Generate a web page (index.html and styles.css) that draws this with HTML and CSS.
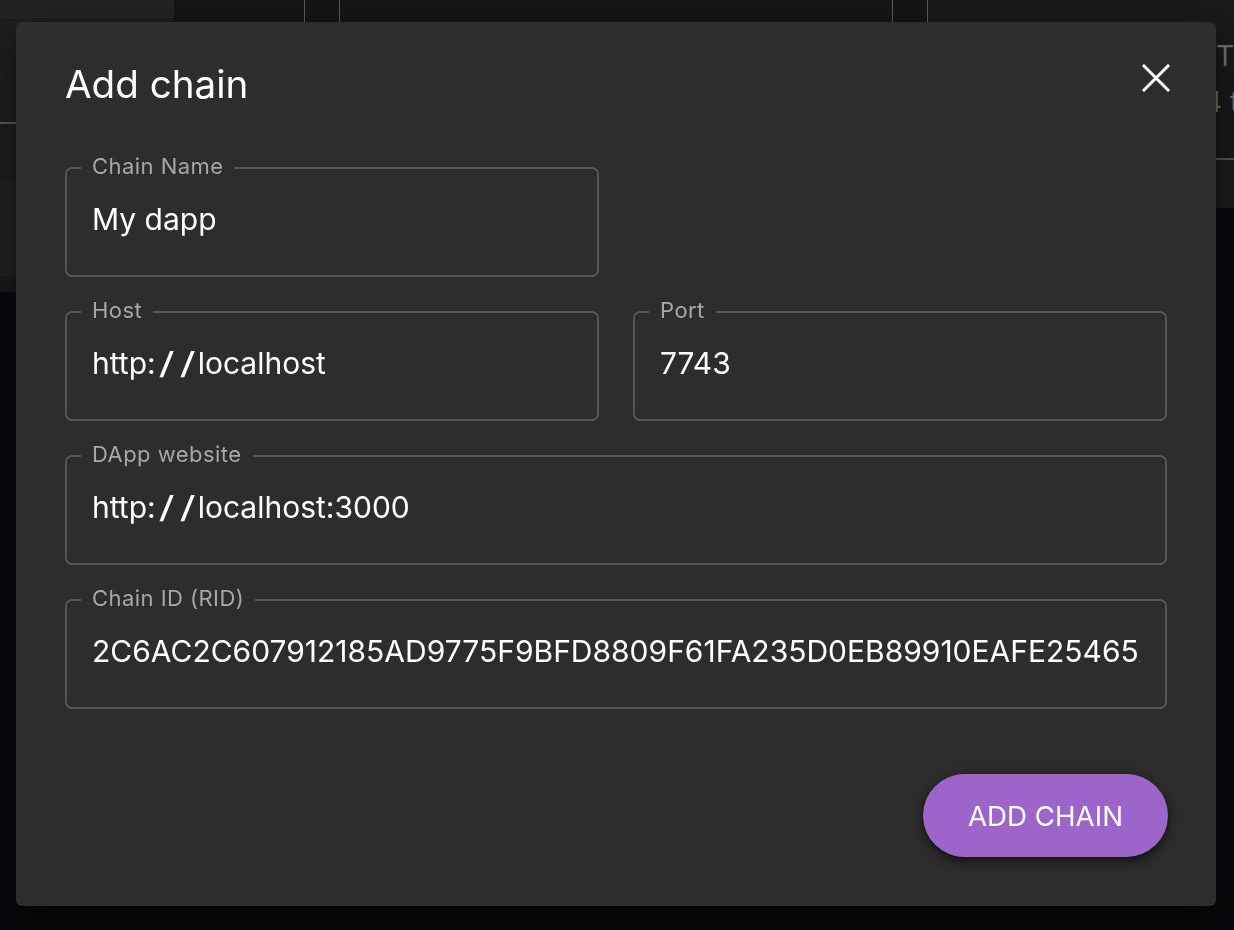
FILE: index.html
```html
<!DOCTYPE html>
<html lang="en">
<head>
<meta charset="utf-8">
<title>Add chain</title>
<link rel="stylesheet" href="styles.css">
</head>
<body>
<div class="app">
  <aside class="sidebar">
    <div class="sb-top"></div>
    <div class="sb-nav"></div>
    <div class="sb-nav2"></div>
    <div class="sb-block"></div>
    <div class="sb-end"></div>
  </aside>
  <main class="main">
    <header class="cards">
      <div class="card c1"></div>
      <div class="card c2"></div>
      <div class="card c3">
        <div class="c3-body">
          <div class="c3-title">T</div>
          <div class="c3-sub">4 t</div>
        </div>
        <div class="c3-foot"></div>
      </div>
    </header>
  </main>
</div>

<div class="modal" role="dialog" aria-labelledby="dlg-title">
  <div class="modal-head">
    <h2 id="dlg-title" class="modal-title">Add chain</h2>
    <button class="close" type="button" aria-label="Close">
      <svg width="28" height="28" viewBox="0 0 28 28" aria-hidden="true">
        <path d="M2 2 L26 26 M26 2 L2 26" stroke="#ffffff" stroke-width="3" stroke-linecap="square" fill="none"/>
      </svg>
    </button>
  </div>
  <form class="form">
    <div class="field">
      <span class="label" id="l-name">Chain Name</span>
      <div class="input" role="textbox" aria-labelledby="l-name" contenteditable="true" spellcheck="false">My dapp</div>
    </div>
    <div class="spacer"></div>
    <div class="field">
      <span class="label" id="l-host">Host</span>
      <div class="input" role="textbox" aria-labelledby="l-host" contenteditable="true" spellcheck="false">http:<span class="sl">/</span><span class="sl">/</span>localhost</div>
    </div>
    <div class="field">
      <span class="label" id="l-port">Port</span>
      <div class="input" role="textbox" aria-labelledby="l-port" contenteditable="true" spellcheck="false">7743</div>
    </div>
    <div class="field wide">
      <span class="label" id="l-web">DApp website</span>
      <div class="input" role="textbox" aria-labelledby="l-web" contenteditable="true" spellcheck="false">http:<span class="sl">/</span><span class="sl">/</span>localhost:3000</div>
    </div>
    <div class="field wide">
      <span class="label" id="l-rid">Chain ID (RID)</span>
      <div class="input" role="textbox" aria-labelledby="l-rid" contenteditable="true" spellcheck="false">2C6AC2C607912185AD9775F9BFD8809F61FA235D0EB89910EAFE25465A3C8E1</div>
    </div>
  </form>
  <div class="actions">
    <button class="btn-primary" type="button">ADD CHAIN</button>
  </div>
</div>
</body>
</html>
```

FILE: styles.css
```css
* { box-sizing: border-box; }

html, body {
  margin: 0;
  height: 100%;
}

body {
  background: #09080c;
  font-family: Inter, "Noto Sans", "DejaVu Sans", sans-serif;
  color: #ffffff;
  overflow: hidden;
}

/* ---------- background app (dimmed behind the dialog) ---------- */
.app {
  display: flex;
  align-items: flex-start;
  height: 100%;
}

.sidebar {
  width: 174px;
  flex: none;
  display: flex;
  flex-direction: column;
}

.sb-top { height: 18px; background: #232323; border-bottom: 1px solid #2b2b2b; }
.sb-nav { height: 106px; background: #1f1f1f; border-bottom: 2px solid #5e5e5e; }
.sb-nav2 { height: 56px; background: #1f1f1f; }
.sb-block { height: 96px; background: #222222; }
.sb-end { height: 16px; background: #1b1b1b; }

.main {
  flex: 1;
  min-width: 0;
}

.cards {
  height: 208px;
  background: #151515;
  display: flex;
  gap: 34px;
  overflow: hidden;
}

.card {
  flex: none;
  margin-top: -4px;
  border: 1px solid #5a5a5a;
  border-radius: 5px;
  background: #161616;
}

.c1 { width: 151px; height: 150px; margin-left: -20px; }
.c2 { width: 554px; height: 150px; }
.c3 {
  width: 340px;
  height: 212px;
  display: flex;
  flex-direction: column;
  background: #1a1a1a;
  border: none;
  border-left: 1px solid #5a5a5a;
}

.c3-body {
  flex: 1;
  padding: 37px 0 0 288px;
  color: #747474;
  font-size: 28px;
  line-height: 46px;
  white-space: nowrap;
}

.c3-sub { margin-left: -12px; }

.c3-foot {
  height: 50px;
  border-top: 2px solid #555555;
  background: #1c1c1c;
}

/* ---------- dialog ---------- */
.modal {
  position: fixed;
  left: 16px;
  top: 22px;
  width: 1200px;
  height: 884px;
  background: #2d2d2d;
  border-radius: 6px;
  padding: 39px 49px 49px;
  box-shadow: 0 11px 15px -7px rgba(0, 0, 0, 0.35), 0 24px 38px 3px rgba(0, 0, 0, 0.25), 0 9px 46px 8px rgba(0, 0, 0, 0.2);
  display: flex;
  flex-direction: column;
}

.modal-head {
  display: flex;
  justify-content: space-between;
  align-items: flex-start;
  height: 46px;
}

.modal-title {
  margin: 0;
  font-size: 38.6px;
  line-height: 46px;
  font-weight: 400;
  color: #ffffff;
}

.close {
  margin: 3px -3px 0 0;
  padding: 0;
  border: none;
  background: none;
  width: 28px;
  height: 28px;
  display: flex;
  cursor: pointer;
}

.form {
  margin-top: 60px;
  display: grid;
  grid-template-columns: 1fr 1fr;
  grid-auto-rows: 110px;
  column-gap: 34px;
  row-gap: 34px;
}

.field {
  position: relative;
  border: 2px solid #575757;
  border-radius: 7px;
  display: flex;
  align-items: center;
}

.field.wide { grid-column: 1 / 3; }

.label {
  position: absolute;
  top: -15px;
  left: 14px;
  padding: 0 11px;
  background: #2d2d2d;
  color: #a7a7a7;
  font-size: 22px;
  letter-spacing: 0.45px;
  line-height: 24px;
  white-space: nowrap;
}

.input {
  flex: 1;
  min-width: 0;
  overflow: hidden;
  white-space: nowrap;
  outline: none;
  color: #ffffff;
  font-size: 30px;
  line-height: 36px;
  margin: 0 25px;
  padding: 0 0 6px 0;
}

.sl {
  display: inline-block;
  width: 21px;
  text-align: center;
  transform: scaleX(1.5);
}

.actions {
  margin-top: 65px;
  display: flex;
  justify-content: flex-end;
}

.btn-primary {
  height: 83px;
  padding: 0 45px;
  margin-right: -1px;
  border: none;
  border-radius: 42px;
  background: #9d64cb;
  color: #ffffff;
  font-family: inherit;
  font-size: 27.7px;
  font-weight: 400;
  box-shadow: 0 3px 5px -1px rgba(0, 0, 0, 0.35), 0 6px 10px 0 rgba(0, 0, 0, 0.25), 0 1px 18px 0 rgba(0, 0, 0, 0.2);
  cursor: pointer;
}
```
